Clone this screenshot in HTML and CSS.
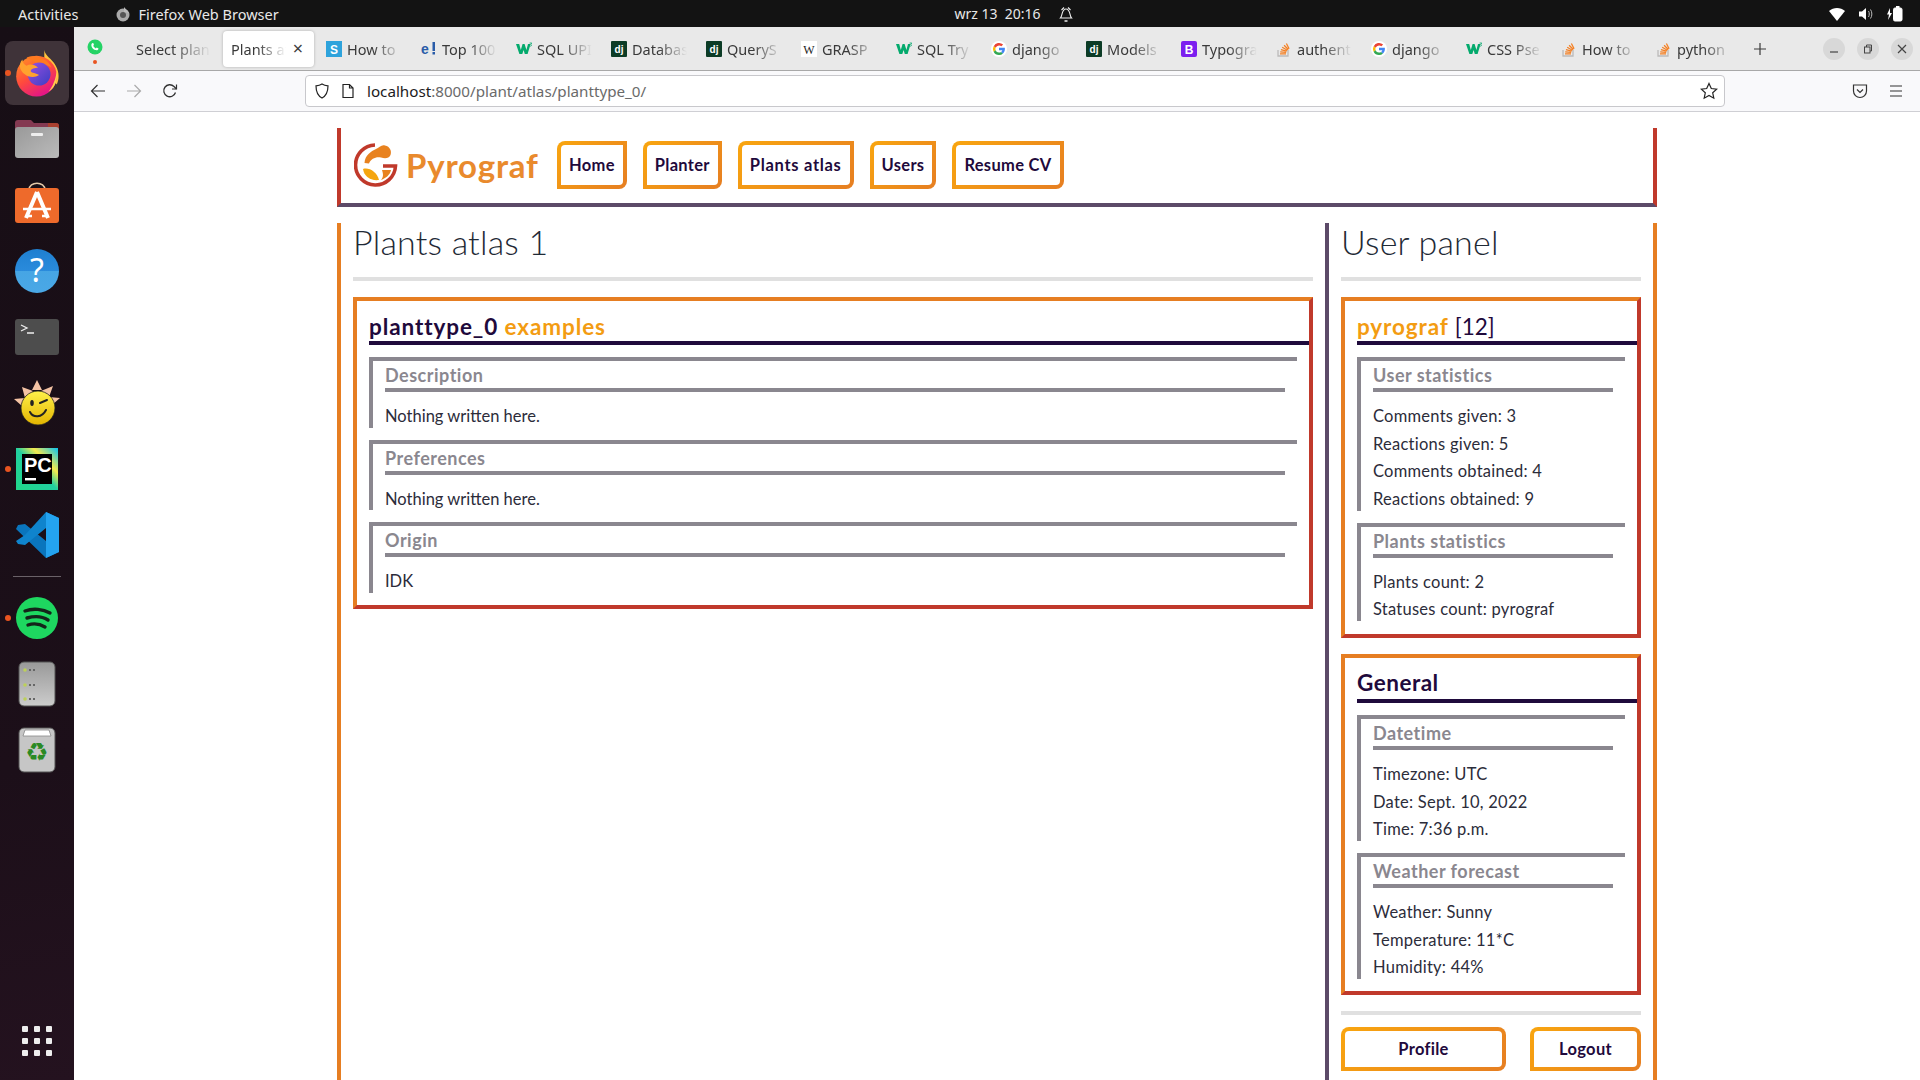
FILE: index.html
```html
<!DOCTYPE html>
<html lang="pl">
<head>
<meta charset="utf-8">
<title>Plants atlas</title>
<link rel="stylesheet" href="styles.css">
</head>
<body>
<svg class="defs" width="0" height="0" aria-hidden="true">
  <defs>
    <g id="fav-dj"><rect width="16" height="16" rx="1" fill="#0c3c26"/><text x="8" y="12" text-anchor="middle" class="fav-text" fill="#fff" font-size="10">dj</text></g>
    <g id="fav-w3"><path d="M0 3h3.2l1.6 6 1.8-6h2l1.8 6 1.6-6h2.6l-3 10H8.8L7.6 9l-1.3 4H3.4z" fill="#04aa6d"/><path d="M13.6 2h2.2l-1 1.4c.9.3.8 1.9-.5 1.9" fill="none" stroke="#04aa6d" stroke-width=".8"/></g>
    <g id="fav-g"><circle cx="8" cy="8" r="8" fill="#fff"/><path d="M8 4.4a3.6 3.6 0 0 1 2.4.9l1.7-1.7A6 6 0 0 0 2.7 5.3l2 1.5A3.6 3.6 0 0 1 8 4.4z" fill="#ea4335"/><path d="M4.4 8c0-.4.1-.8.2-1.2l-2-1.5a6 6 0 0 0 0 5.4l2-1.5A3.6 3.6 0 0 1 4.4 8z" fill="#fbbc05"/><path d="M8 11.6a3.6 3.6 0 0 1-3.4-2.4l-2 1.5A6 6 0 0 0 8 14a5.7 5.7 0 0 0 4-1.5l-1.9-1.5a3.6 3.6 0 0 1-2.1.6z" fill="#34a853"/><path d="M13.8 6.800H8v2.500h3.300a2.900 2.900 0 0 1-1.200 1.700l1.900 1.500c1.200-1.100 1.900-2.700 1.900-4.500 0-.6 0-1.200-.1-1.200z" fill="#4285f4"/></g>
    <g id="fav-so"><path d="M2 9v6h10V9" fill="none" stroke="#bcbbbb" stroke-width="1.300"/><path d="M4 12.800h6M4.200 10.800l6 .6M4.900 8.600l5.800 1.600M6.200 6.300l5.200 3M8.100 4.200l4.200 4.300M10.400 2.500l2.700 5.300" fill="none" stroke="#f48024" stroke-width="1.300"/></g>
  </defs>
</svg>

<header class="topbar">
  <div class="topbar-left">
    <span class="top-activities">Activities</span>
    <svg class="top-ff" width="16" height="16" viewBox="0 0 16 16"><circle cx="8" cy="9" r="6.500" fill="#aaa"/><circle cx="8" cy="9" r="3" fill="#555"/><path d="M9 1c1 2 4 3 5 6l-5-1z" fill="#bbb"/></svg>
    <span>Firefox Web Browser</span>
  </div>
  <div class="topbar-clock">
    <span>wrz 13&nbsp; 20:16</span>
    <svg width="14" height="18" viewBox="0 0 14 18" fill="none" stroke="#eee" stroke-width="1.100"><path d="M1.500 13c2-2 1-9 5.500-9s3.500 7 5.500 9zM5 2.500 2.500 5M9 2.500 11.500 5"/><path d="M5.500 16h3" stroke-width="1.500"/></svg>
  </div>
  <div class="topbar-right">
    <svg width="18" height="16" viewBox="0 0 18 16"><path d="M1 5c4.500-4 11.500-4 16 0l-8 10z" fill="#fff"/></svg>
    <svg width="16" height="16" viewBox="0 0 16 16"><path d="M1 5.500h3l4-3.500v12l-4-3.500H1z" fill="#fff"/><path d="M10.500 5c1 1.500 1 4.500 0 6M12.500 3.500c1.800 2.500 1.800 6.500 0 9" fill="none" stroke="#bbb" stroke-width="1"/></svg>
    <svg width="18" height="18" viewBox="0 0 18 18"><path d="M4 3 1 9.500h2L2 15l4-7H4z" fill="#fff"/><rect x="7.500" y="3" width="8.500" height="13" rx="1.500" fill="#fff" stroke="#fff"/><rect x="10" y="1" width="3.500" height="2" fill="#fff"/></svg>
  </div>
</header>

<div class="desktop">
  <nav class="dock">
    <div class="dock-slot dock-active">
      <span class="run-dot"></span>
      <svg width="50" height="50" viewBox="0 0 48 48">
        <defs>
          <linearGradient id="ffa" x1="0" y1="0" x2=".6" y2="1"><stop offset="0" stop-color="#ff9a1f"/><stop offset=".55" stop-color="#ff4a3d"/><stop offset="1" stop-color="#e31587"/></linearGradient>
          <linearGradient id="ffb" x1="0" y1="0" x2="1" y2="1"><stop offset="0" stop-color="#9a4fe0"/><stop offset="1" stop-color="#3a3ec4"/></linearGradient>
        </defs>
        <path d="M31 2c1 6 7 8 11 15 4 7 3 14 1 18L31 20z" fill="#ffc33c"/>
        <circle cx="23.500" cy="27" r="19.500" fill="url(#ffa)"/>
        <path d="M14 9c9-3 20 1 24 10-4-3-8-3-10-2z" fill="#ff7a1f"/>
        <circle cx="26" cy="25" r="11" fill="url(#ffb)"/>
        <path d="M8 20c-1-4 0-7 2-9 0 3 2 5 4 6 3-2 8-1 11 2-3 0-7 1-7 3s6 2 8 4c-4 3-11 2-14-1-2-1-3-3-4-5z" fill="#ffa22e"/>
        <path d="M43 22c1 8-1 16-8 20 4-5 7-12 8-20z" fill="#ffd04a"/>
      </svg>
    </div>
    <div class="dock-slot">
      <svg width="48" height="48" viewBox="0 0 48 48">
        <defs><linearGradient id="fold" x1="0" y1="0" x2="1" y2="1"><stop offset="0" stop-color="#999"/><stop offset="1" stop-color="#bbb"/></linearGradient></defs>
        <path d="M2 8a3 3 0 0 1 3-3h13l3 3h22a3 3 0 0 1 3 3v10H2z" fill="#843a52"/>
        <path d="M35 8h8a3 3 0 0 1 3 3v8l-11-6z" fill="#a9402f"/>
        <rect x="2" y="12" width="44" height="31" rx="3" fill="url(#fold)"/>
        <rect x="18" y="18" width="12" height="3" rx="1" fill="#eee"/>
      </svg>
    </div>
    <div class="dock-slot">
      <svg class="shift-up" width="48" height="48" viewBox="0 0 48 48">
        <path d="M16 12c0-9 16-9 16 0" fill="none" stroke="#e4c9a8" stroke-width="1.500"/>
        <rect x="2" y="10" width="44" height="35" rx="3" fill="#ee6a2b"/>
        <path d="M24 14 13 40M24 14l11 26" stroke="#fff" stroke-width="4" fill="none"/>
        <path d="M10 31h28M14 38h5M29 38h5" stroke="#fff" stroke-width="2.500" fill="none"/>
      </svg>
    </div>
    <div class="dock-slot">
      <svg width="48" height="48" viewBox="0 0 48 48">
        <defs><linearGradient id="help" x1="0" y1="0" x2="0" y2="1"><stop offset="0" stop-color="#1f7fd0"/><stop offset=".5" stop-color="#2a8bdc"/><stop offset=".5" stop-color="#46a5e4"/><stop offset="1" stop-color="#4aa8e6"/></linearGradient></defs>
        <circle cx="24" cy="24" r="22" fill="url(#help)"/>
        <text x="24" y="35" text-anchor="middle" class="dock-q">?</text>
      </svg>
    </div>
    <div class="dock-slot">
      <svg width="48" height="48" viewBox="0 0 48 48">
        <rect x="2" y="6" width="44" height="36" rx="3" fill="#4d4d4d"/>
        <path d="M8 12l6 3-6 3M14 20h7" fill="none" stroke="#eee" stroke-width="1.300"/>
      </svg>
    </div>
    <div class="dock-slot">
      <svg width="48" height="48" viewBox="0 0 48 48">
        <defs><linearGradient id="sun" x1="0" y1="0" x2="0" y2="1"><stop offset="0" stop-color="#fff14a"/><stop offset="1" stop-color="#e3b400"/></linearGradient></defs>
        <path d="M24 1l5 10H19zM9 8l11 4-8 7zM40 7l-4 11-8-6zM1 20l11-1-3 8zM47 19l-8 7-3-8z" fill="#f4c3a4"/>
        <circle cx="25" cy="29" r="17" fill="url(#sun)" stroke="#222" stroke-width=".8"/>
        <ellipse cx="19" cy="24" rx="1.800" ry="3" fill="#222"/>
        <path d="M27 24l7-3M17 33c3 6 12 6 16-2" fill="none" stroke="#222" stroke-width="2" stroke-linecap="round"/>
      </svg>
    </div>
    <div class="dock-slot">
      <span class="run-dot"></span>
      <svg width="42" height="42" viewBox="0 0 42 42">
        <defs><linearGradient id="pc" x1="0" y1="1" x2="1" y2="0"><stop offset="0" stop-color="#21d789"/><stop offset=".5" stop-color="#21d0a0"/><stop offset=".7" stop-color="#f5e94e"/><stop offset="1" stop-color="#07c3f2"/></linearGradient></defs>
        <rect width="42" height="42" fill="url(#pc)"/>
        <rect x="6" y="6" width="30" height="30" fill="#000"/>
        <text x="8" y="24" class="dock-pc">PC</text>
        <rect x="9" y="30" width="11" height="2.400" fill="#fff"/>
      </svg>
    </div>
    <div class="dock-slot">
      <svg width="46" height="48" viewBox="0 0 46 48">
        <path d="M32 1 45 7v34l-13 6L2 18l2-4 7-1 21 17z" fill="#0a75bd"/>
        <path d="M2 30l2 3 7 1L32 17V1L11 24z" fill="#0f84cd"/>
        <path d="M32 1l13 6v34l-13 6z" fill="#24a3f0"/>
      </svg>
    </div>
    <div class="dock-divider"></div>
    <div class="dock-slot">
      <span class="run-dot"></span>
      <svg width="42" height="42" viewBox="0 0 42 42">
        <circle cx="21" cy="21" r="21" fill="#1ed760"/>
        <path d="M9 14c8-3 18-2 25 2M11 21c7-2 15-2 21 2M12 28c6-2 12-1 17 2" fill="none" stroke="#14241a" stroke-width="3.400" stroke-linecap="round"/>
      </svg>
    </div>
    <div class="dock-slot">
      <svg width="38" height="46" viewBox="0 0 38 46">
        <defs><linearGradient id="drv" x1="0" y1="0" x2="0" y2="1"><stop offset="0" stop-color="#999"/><stop offset="1" stop-color="#ccc"/></linearGradient></defs>
        <rect x="1" y="1" width="36" height="44" rx="5" fill="url(#drv)" stroke="#555"/>
        <g fill="#bcd05a"><circle cx="7" cy="9" r="1.800"/><circle cx="7" cy="24" r="1.800"/><circle cx="7" cy="38" r="1.800"/></g>
        <g fill="#666"><rect x="11" y="8" width="2" height="2"/><rect x="15" y="8" width="2" height="2"/><rect x="11" y="23" width="2" height="2"/><rect x="15" y="23" width="2" height="2"/><rect x="11" y="37" width="2" height="2"/><rect x="15" y="37" width="2" height="2"/></g>
      </svg>
    </div>
    <div class="dock-slot">
      <svg width="38" height="46" viewBox="0 0 38 46">
        <rect x="1" y="1" width="36" height="44" rx="5" fill="#c6c6c6" stroke="#555"/>
        <path d="M5 9l2-6h24l2 6z" fill="#fff" stroke="#888" stroke-width=".8"/>
        <text x="19" y="34" text-anchor="middle" class="dock-recycle">♻</text>
      </svg>
    </div>
    <div class="dock-grid">
      <i></i><i></i><i></i><i></i><i></i><i></i><i></i><i></i><i></i>
    </div>
  </nav>

  <main class="browser">
    <div class="tabstrip">
      <div class="pinned">
        <svg width="16" height="16" viewBox="0 0 16 16"><circle cx="8" cy="8" r="7.500" fill="#25d366"/><path d="M4.500 5c1-1.500 2-1 2.300.2l.1.800-.7.8c.5 1.200 1.400 2 2.600 2.600l.9-.9 1.800.9c0 1.500-1.500 2.200-3 1.700C5.800 10.300 3.800 7.500 4.500 5z" fill="#fff"/></svg>
        <span class="pin-dot"></span>
      </div>
      <div class="tab tab-noicon"><span class="tab-label">Select plan</span></div>
      <div class="tab tab-active"><span class="tab-label">Plants at</span><span class="tab-x">×</span></div>
      <div class="tab"><svg class="fav" viewBox="0 0 16 16"><rect width="16" height="16" fill="#2ea3dc"/><text x="8" y="12.500" text-anchor="middle" class="fav-text" fill="#fff" font-size="12">S</text></svg><span class="tab-label">How to</span></div>
      <div class="tab"><svg class="fav" viewBox="0 0 16 16"><text x="0" y="13" class="fav-text" fill="#2a5ca8" font-size="14">e</text><rect x="11.500" y="1" width="2.500" height="9" fill="#2a5ca8"/><rect x="11.500" y="11" width="2.500" height="2.500" fill="#2a5ca8"/></svg><span class="tab-label">Top 100</span></div>
      <div class="tab"><svg class="fav" viewBox="0 0 16 16"><use href="#fav-w3"/></svg><span class="tab-label">SQL UPI</span></div>
      <div class="tab"><svg class="fav" viewBox="0 0 16 16"><use href="#fav-dj"/></svg><span class="tab-label">Databas</span></div>
      <div class="tab"><svg class="fav" viewBox="0 0 16 16"><use href="#fav-dj"/></svg><span class="tab-label">QueryS</span></div>
      <div class="tab"><svg class="fav" viewBox="0 0 16 16"><rect width="16" height="16" fill="#fff"/><text x="8" y="12.500" text-anchor="middle" class="fav-serif" fill="#222" font-size="12">W</text></svg><span class="tab-label">GRASP</span></div>
      <div class="tab"><svg class="fav" viewBox="0 0 16 16"><use href="#fav-w3"/></svg><span class="tab-label">SQL Try</span></div>
      <div class="tab"><svg class="fav" viewBox="0 0 16 16"><use href="#fav-g"/></svg><span class="tab-label">django</span></div>
      <div class="tab"><svg class="fav" viewBox="0 0 16 16"><use href="#fav-dj"/></svg><span class="tab-label">Models</span></div>
      <div class="tab"><svg class="fav" viewBox="0 0 16 16"><rect width="16" height="16" rx="2" fill="#7c1fef"/><text x="8" y="12.500" text-anchor="middle" class="fav-text" fill="#fff" font-size="12">B</text></svg><span class="tab-label">Typogra</span></div>
      <div class="tab"><svg class="fav" viewBox="0 0 16 16"><use href="#fav-so"/></svg><span class="tab-label">authent</span></div>
      <div class="tab"><svg class="fav" viewBox="0 0 16 16"><use href="#fav-g"/></svg><span class="tab-label">django</span></div>
      <div class="tab"><svg class="fav" viewBox="0 0 16 16"><use href="#fav-w3"/></svg><span class="tab-label">CSS Pse</span></div>
      <div class="tab"><svg class="fav" viewBox="0 0 16 16"><use href="#fav-so"/></svg><span class="tab-label">How to</span></div>
      <div class="tab"><svg class="fav" viewBox="0 0 16 16"><use href="#fav-so"/></svg><span class="tab-label">python</span></div>
      <div class="tab-new"><svg width="14" height="14" viewBox="0 0 14 14"><path d="M7 1v12M1 7h12" stroke="#3a3a3a" stroke-width="1.200"/></svg></div>
      <div class="win-buttons">
        <span class="win-btn"><svg width="10" height="10" viewBox="0 0 10 10"><path d="M1 8h8" stroke="#444" stroke-width="1.200"/></svg></span>
        <span class="win-btn"><svg width="10" height="10" viewBox="0 0 10 10" fill="none" stroke="#444"><rect x="1.500" y="3" width="5.500" height="6"/><path d="M3.500 3V1h5v6H7"/></svg></span>
        <span class="win-btn"><svg width="10" height="10" viewBox="0 0 10 10"><path d="M1 1l8 8M9 1 1 9" stroke="#444" stroke-width="1.200"/></svg></span>
      </div>
    </div>
    <div class="toolbar">
      <svg class="tb-back" width="16" height="16" viewBox="0 0 16 16" fill="none" stroke="#333" stroke-width="1.200"><path d="M15 8H1.500M7.500 2l-6 6 6 6"/></svg>
      <svg class="tb-fwd" width="16" height="16" viewBox="0 0 16 16" fill="none" stroke="#aaa" stroke-width="1.200"><path d="M1 8h13.500M8.500 2l6 6-6 6"/></svg>
      <svg class="tb-reload" width="16" height="16" viewBox="0 0 16 16" fill="none" stroke="#333" stroke-width="1.300"><path d="M13.500 9.500A6 6 0 1 1 12 3.500L14.500 6"/><path d="M14.500 1.500V6H10" stroke-width="1.200"/></svg>
      <div class="urlbar">
        <svg width="16" height="16" viewBox="0 0 16 16" fill="none" stroke="#222" stroke-width="1.200"><path d="M8 1c2 1.300 4 1.700 6 1.800C14 9 12 13 8 15 4 13 2 9 2 2.800 4 2.700 6 2.300 8 1z"/></svg>
        <svg class="url-page" width="14" height="16" viewBox="0 0 14 16" fill="none" stroke="#222" stroke-width="1.200"><path d="M2 1.500h6.500L12 5v9.500H2zM8.500 1.500V5H12"/></svg>
        <span class="url-text"><b>localhost</b>:8000/plant/atlas/planttype_0/</span>
        <svg width="18" height="18" viewBox="0 0 18 18" fill="none" stroke="#222" stroke-width="1.200"><path d="M9 1.500l2.300 5 5.400.6-4 3.700 1.100 5.400L9 13.500l-4.800 2.700 1.100-5.400-4-3.700 5.400-.6z"/></svg>
      </div>
      <svg class="tb-pocket" width="16" height="16" viewBox="0 0 16 16" fill="none" stroke="#333" stroke-width="1.200"><path d="M1.500 2h13v6a6.500 6.500 0 0 1-13 0z"/><path d="M5 6.500l3 3 3-3"/></svg>
      <svg class="tb-menu" width="16" height="16" viewBox="0 0 16 16" stroke="#333" stroke-width="1.200"><path d="M2 3h12M2 8h12M2 13h12"/></svg>
    </div>

    <div class="viewport">
      <div class="site">
        <header class="site-header">
          <a class="logo">
            <svg width="44" height="44" viewBox="0 0 44 44">
              <path d="M21 2A20 20 0 1 0 41.500 23H29" fill="none" stroke="#c0392b" stroke-width="3.600"/>
              <path d="M10.500 20C11 12 17 8.500 22 6c3-1.500 6-5 9-3.500 5 1 7 5.500 5.500 9.500-1.500 3.500-5.500 4-9.500 2.500-5-1-10 1-12 6z" fill="#e8821f"/>
              <path d="M9 26c6-2 14 3 16 11-9 1-15-4-16-11z" fill="#f5a50f"/>
              <path d="M28 27h9c-1 5-5 8-10 10 3-3 2-7 1-10z" fill="#e8821f"/>
            </svg>
            <span class="logo-text">Pyrograf</span>
          </a>
          <a class="btn btn-nav">Home</a>
          <a class="btn btn-nav">Planter</a>
          <a class="btn btn-nav btn-atlas">Plants atlas</a>
          <a class="btn btn-nav">Users</a>
          <a class="btn btn-nav">Resume CV</a>
        </header>

        <div class="columns">
          <section class="col col-main">
            <h1 class="col-title">Plants atlas 1</h1>
            <hr class="rule">
            <article class="card">
              <h2 class="card-title">planttype_0 <span class="hl">examples</span></h2>
              <div class="sect">
                <h3 class="sect-title">Description</h3>
                <p>Nothing written here.</p>
              </div>
              <div class="sect">
                <h3 class="sect-title">Preferences</h3>
                <p>Nothing written here.</p>
              </div>
              <div class="sect">
                <h3 class="sect-title">Origin</h3>
                <p>IDK</p>
              </div>
            </article>
          </section>

          <aside class="col col-side">
            <h1 class="col-title">User panel</h1>
            <hr class="rule">
            <article class="card card-user">
              <h2 class="card-title"><span class="hl">pyrograf</span> <span class="thin">[12]</span></h2>
              <div class="sect">
                <h3 class="sect-title">User statistics</h3>
                <p>Comments given: 3</p>
                <p>Reactions given: 5</p>
                <p>Comments obtained: 4</p>
                <p>Reactions obtained: 9</p>
              </div>
              <div class="sect">
                <h3 class="sect-title">Plants statistics</h3>
                <p>Plants count: 2</p>
                <p>Statuses count: pyrograf</p>
              </div>
            </article>
            <article class="card">
              <h2 class="card-title card-title-general">General</h2>
              <div class="sect">
                <h3 class="sect-title">Datetime</h3>
                <p>Timezone: UTC</p>
                <p>Date: Sept. 10, 2022</p>
                <p>Time: 7:36 p.m.</p>
              </div>
              <div class="sect">
                <h3 class="sect-title">Weather forecast</h3>
                <p>Weather: Sunny</p>
                <p>Temperature: 11*C</p>
                <p>Humidity: 44%</p>
              </div>
            </article>
            <hr class="rule rule-foot">
            <div class="side-actions">
              <a class="btn btn-side btn-profile">Profile</a>
              <a class="btn btn-side btn-logout">Logout</a>
            </div>
          </aside>
        </div>
      </div>
    </div>
  </main>
</div>
</body>
</html>
```
FILE: styles.css
```css
* { box-sizing: border-box; }
html, body { margin: 0; height: 100%; }
body {
  width: 1920px; height: 1080px; overflow: hidden;
  display: flex; flex-direction: column;
  font-family: "Lato", "Noto Sans", sans-serif;
  background: #fff;
}
.defs { display: block; height: 0; }

/* GNOME top bar */
.topbar {
  height: 27px; flex: none; background: #131313; color: #e8e8e8;
  font: 14.500px "Noto Sans", sans-serif;
  display: grid; grid-template-columns: 1fr auto 1fr; align-items: center;
}
.topbar-left { display: flex; align-items: center; }
.top-activities { margin-left: 18px; margin-right: 37px; }
.top-ff { margin-right: 7px; }
.topbar-clock { display: flex; align-items: center; gap: 18px; margin-left: 107px; font-size: 14px; }
.topbar-right { display: flex; align-items: center; justify-content: flex-end; gap: 12px; padding-right: 16px; }

.desktop { flex: 1; display: flex; min-height: 0; }

/* Dock */
.dock {
  width: 74px; flex: none; position: relative;
  background: linear-gradient(170deg, #170e15, #1c0f19 70%, #24121f);
  padding-top: 13px; display: flex; flex-direction: column;
}
.dock-slot { height: 66px; flex: none; display: flex; align-items: center; justify-content: center; position: relative; }
.dock-active { margin: 1px 5px 0; height: 64px; background: #3f3339; border-radius: 8px; margin-bottom: 1px; }
.run-dot { position: absolute; left: 5px; top: 50%; margin-top: -3px; width: 6px; height: 6px; border-radius: 50%; background: #e95420; }
.dock-active .run-dot { left: 0; }
.shift-up { margin-top: -6px; }
.dock-divider { height: 1px; background: #6a6168; margin: 8px 13px 8px; flex: none; }
.dock-q { font: 400 32px "Noto Sans", sans-serif; fill: #fff; }
.dock-pc { font: 700 20px "Liberation Sans", sans-serif; fill: #fff; }
.dock-recycle { font: 26px "DejaVu Sans", sans-serif; fill: #2a8a24; }
.dock-grid {
  position: absolute; left: 22px; top: 999px;
  display: grid; grid-template-columns: repeat(3, 6px); gap: 6px;
}
.dock-grid i { width: 6px; height: 6px; background: #eee; border-radius: 1px; }

/* Browser chrome */
.browser { flex: 1; min-width: 0; display: flex; flex-direction: column; background: #fff; }
.tabstrip {
  height: 44px; flex: none; background: #e9e9e9; border-bottom: 1px solid #a8a8a8;
  display: flex; align-items: stretch; font: 14.500px "Noto Sans", sans-serif; color: #3a3a3a;
}
.pinned { width: 54px; flex: none; position: relative; display: flex; align-items: center; justify-content: center; padding-right: 12px; padding-bottom: 3px; }
.pin-dot { position: absolute; left: 19px; top: 33px; width: 4px; height: 4px; background: #e95420; border-radius: 50%; }
.tab { width: 95px; flex: none; display: flex; align-items: center; gap: 5px; padding: 0 8px; overflow: hidden; }
.tab-noicon { padding-left: 8px; }
.tab-active {
  margin: 4px 4px 3px 0; width: 91px; background: #fff; border-radius: 4px;
  box-shadow: 0 0 3px rgba(0,0,0,.25); padding: 0 8px; gap: 0; position: relative;
}
.tab-active .tab-label { flex: none; width: 58px; }
.tab-x { font-size: 18px; line-height: 1; position: absolute; right: 11px; top: 8px; }
.tab-label {
  white-space: nowrap; flex: 1; min-width: 0;
  -webkit-mask-image: linear-gradient(90deg, #000 45%, transparent 95%);
  mask-image: linear-gradient(90deg, #000 45%, transparent 95%);
}
.fav { width: 16px; height: 16px; flex: none; }
.fav-text { font-family: "Liberation Sans", sans-serif; font-weight: 700; }
.fav-serif { font-family: "Liberation Serif", serif; }
.tab-new { width: 30px; flex: none; display: flex; align-items: center; justify-content: center; margin-left: 2px; }
.win-buttons { margin-left: auto; display: flex; align-items: center; gap: 12px; padding-right: 7px; }
.win-btn { width: 22px; height: 22px; border-radius: 50%; background: #d8d8d8; display: flex; align-items: center; justify-content: center; }

.toolbar {
  height: 41px; flex: none; background: #f9f9fb; border-bottom: 1px solid #cfcfd4;
  display: flex; align-items: center;
}
.tb-back { margin-left: 16px; }
.tb-fwd { margin-left: 20px; }
.tb-reload { margin-left: 20px; }
.urlbar {
  margin-left: 127px; width: 1420px; height: 32px; background: #fff;
  border: 1px solid #c8c8cc; border-radius: 4px;
  display: flex; align-items: center; padding: 0 6px 0 8px;
  font: 15.200px "Noto Sans", sans-serif; color: #6a6a6a;
}
.url-page { margin-left: 11px; }
.url-text { margin-left: 12px; flex: 1; }
.url-text b { font-weight: 400; color: #1c1b22; }
.tb-pocket { margin-left: 127px; }
.tb-menu { margin-left: 20px; }

/* Page */
.viewport { flex: 1; min-height: 0; overflow: hidden; padding-top: 16px; }
.site { width: 1320px; margin: 0 auto; color: #2c2c3a; }
.site-header {
  height: 79px; display: flex; align-items: flex-start; padding: 13px 0 0 13px;
  border-left: 4px solid #c0392b; border-right: 4px solid #c0392b; border-bottom: 4px solid #5c4a68;
}
.logo { display: flex; align-items: center; height: 48px; width: 203px; gap: 8px; }
.logo-text { font: 700 33px "Lato", sans-serif; color: #e98a2d; letter-spacing: .8px; }
.btn {
  display: flex; align-items: center; justify-content: center;
  border: 4px solid transparent; color: #1f0a3c; font: 700 16.500px "Lato", sans-serif;
  background: linear-gradient(#fff, #fff) padding-box, linear-gradient(135deg, #f9a60f, #e67e22) border-box;
}
.btn-nav { height: 48px; margin-right: 16px; border-radius: 8px 0 8px 0; padding: 0 8px; letter-spacing: .3px; }
.btn-atlas { letter-spacing: .7px; }
.btn-side { height: 44px; border-radius: 8px 8px 8px 0; letter-spacing: .3px; }
.btn-profile { width: 165px; }
.btn-logout { width: 111px; }

.columns { display: grid; grid-template-columns: 976px 332px; gap: 12px; margin-top: 16px; }
.col { padding: 0 12px; height: 900px; }
.col-main { border-left: 4px solid #e67e22; padding-right: 0; }
.col-side { border-left: 4px solid #5c4a68; border-right: 4px solid #e67e22; }
.col-title { margin: 0; height: 54px; font: 300 34px/37px "Lato", sans-serif; color: #1f2a36; letter-spacing: .2px; }
.rule { margin: 0 0 16px; height: 4px; border: 0; background: #e0e0e0; }
.rule-foot { margin-bottom: 12px; }

.card {
  border: 4px solid; border-color: #e67e22 #c0392b #c0392b #e67e22;
  padding: 0 0 12px 12px; margin-bottom: 16px;
}
.card-user { padding-bottom: 13px; }
.card-title {
  margin: 0 0 12px; height: 44px; border-bottom: 4px solid #1f0a3c;
  font: 700 22.500px/51px "Lato", sans-serif; color: #1f0a3c; letter-spacing: .9px;
}
.card-title-general { height: 45px; letter-spacing: .5px; line-height: 49px; }
.hl { color: #f39c12; font-weight: 700; }
.thin { font-weight: 400; letter-spacing: 0; }
.sect {
  margin: 0 12px 12px 0; padding-left: 12px;
  border-top: 4px solid #8a878f; border-left: 4px solid #8a878f;
}
.sect:last-child { margin-bottom: 0; }
.sect-title {
  margin: 0 12px 12px 0; height: 31px; border-bottom: 4px solid #8a878f;
  font: 700 18px/29px "Lato", sans-serif; color: #8a878f; letter-spacing: .5px;
}
.sect p { margin: 0 0 4px; padding-top: 2px; line-height: 21.670px; font-size: 16.500px; font-weight: 400; letter-spacing: .25px; }
.sect p:last-child { margin-bottom: 0; }
.col-main .sect p { letter-spacing: 0; }
.side-actions { display: flex; justify-content: space-between; }
```
